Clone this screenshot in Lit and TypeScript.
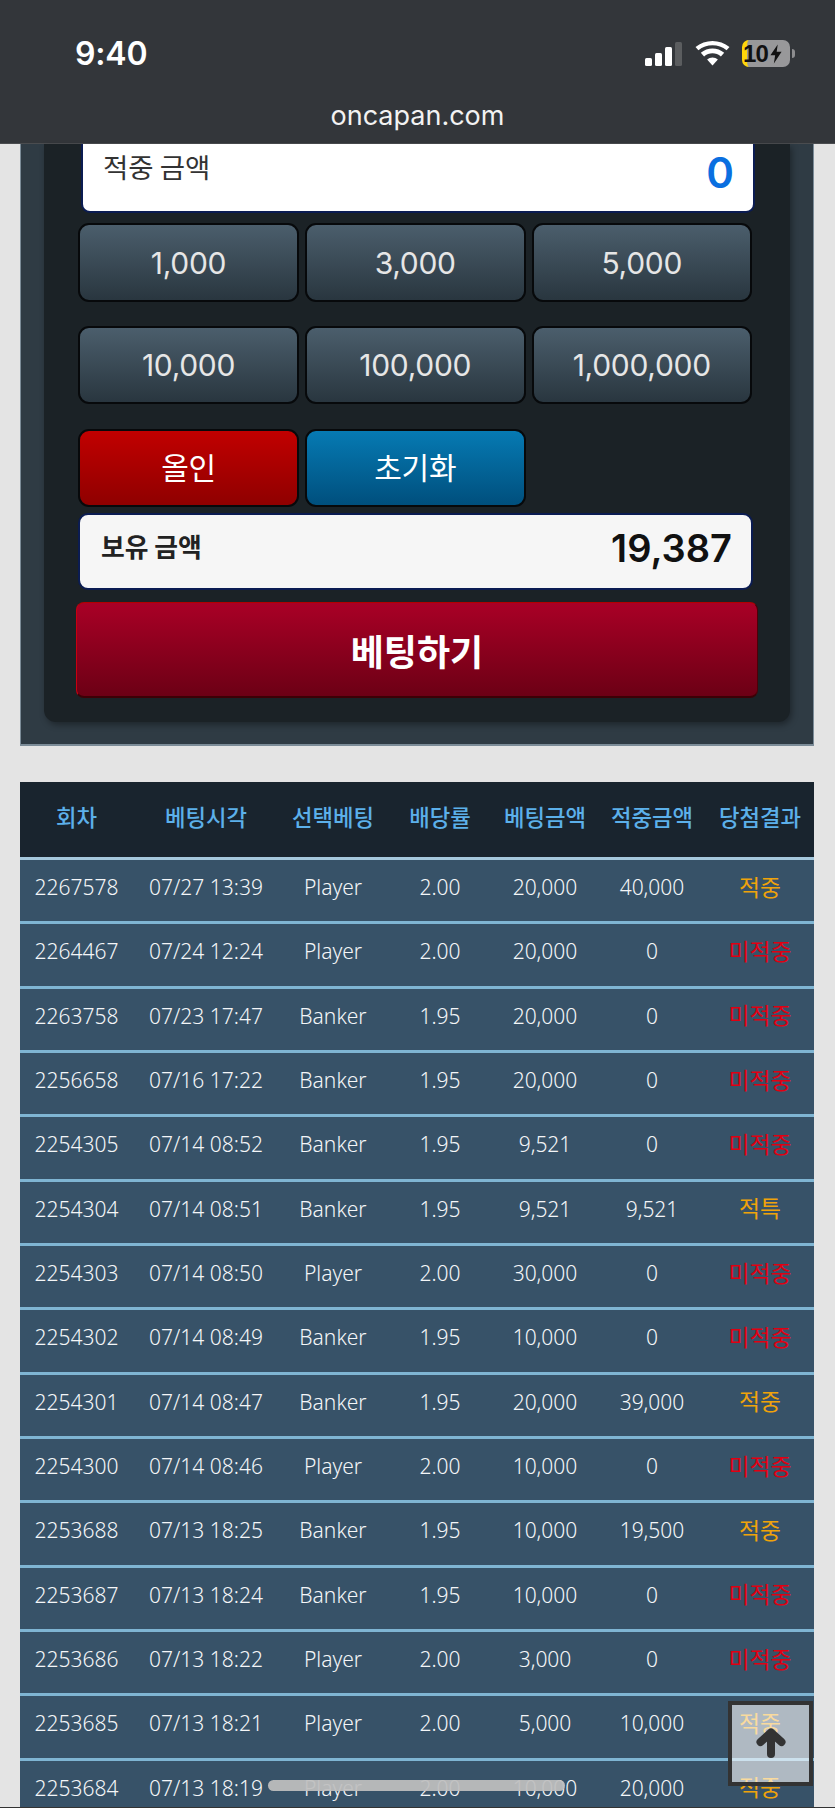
import { LitElement, html, css, svg } from "lit";
import { customElement } from "lit/decorators.js";

type Row = [string, string, string, string, string, string, string];

const HEADERS = ["회차", "베팅시각", "선택베팅", "배당률", "베팅금액", "적중금액", "당첨결과"];

const ROWS: Row[] = [
  ["2267578", "07/27 13:39", "Player", "2.00", "20,000", "40,000", "적중"],
  ["2264467", "07/24 12:24", "Player", "2.00", "20,000", "0", "미적중"],
  ["2263758", "07/23 17:47", "Banker", "1.95", "20,000", "0", "미적중"],
  ["2256658", "07/16 17:22", "Banker", "1.95", "20,000", "0", "미적중"],
  ["2254305", "07/14 08:52", "Banker", "1.95", "9,521", "0", "미적중"],
  ["2254304", "07/14 08:51", "Banker", "1.95", "9,521", "9,521", "적특"],
  ["2254303", "07/14 08:50", "Player", "2.00", "30,000", "0", "미적중"],
  ["2254302", "07/14 08:49", "Banker", "1.95", "10,000", "0", "미적중"],
  ["2254301", "07/14 08:47", "Banker", "1.95", "20,000", "39,000", "적중"],
  ["2254300", "07/14 08:46", "Player", "2.00", "10,000", "0", "미적중"],
  ["2253688", "07/13 18:25", "Banker", "1.95", "10,000", "19,500", "적중"],
  ["2253687", "07/13 18:24", "Banker", "1.95", "10,000", "0", "미적중"],
  ["2253686", "07/13 18:22", "Player", "2.00", "3,000", "0", "미적중"],
  ["2253685", "07/13 18:21", "Player", "2.00", "5,000", "10,000", "적중"],
  ["2253684", "07/13 18:19", "Player", "2.00", "10,000", "20,000", "적중"],
];

const AMOUNTS = ["1,000", "3,000", "5,000", "10,000", "100,000", "1,000,000"];

const signalIcon = svg`<svg width="37" height="24" viewBox="0 0 37 24">
  <rect x="0" y="16" width="7" height="8" rx="1.5" fill="#fff"></rect>
  <rect x="10" y="11" width="7" height="13" rx="1.5" fill="#fff"></rect>
  <rect x="20" y="5" width="7" height="19" rx="1.5" fill="#fff"></rect>
  <rect x="30" y="0" width="7" height="24" rx="1.5" fill="#5b5d5f"></rect>
</svg>`;

const wifiIcon = svg`<svg width="35" height="25" viewBox="0 0 34 25">
  <path d="M17 24.5 L11.6 18.6 C14.6 15.9 19.4 15.9 22.4 18.6 Z" fill="#fff"></path>
  <path d="M8.6 15.4 L5.3 11.8 C12 6 22 6 28.7 11.8 L25.4 15.4 C20.6 11.2 13.4 11.2 8.6 15.4 Z" fill="#fff"></path>
  <path d="M2.9 9.2 L0 6 C9.6 -2 24.4 -2 34 6 L31.1 9.2 C23 2.6 11 2.6 2.9 9.2 Z" fill="#fff"></path>
</svg>`;

const boltIcon = svg`<svg class="bolt" width="12" height="22" viewBox="0 0 14 22">
  <path d="M9 0 L0.5 12.5 H6 L4.5 22 L13.5 8.5 H7.8 Z" fill="#111"></path>
</svg>`;

const arrowIcon = svg`<svg width="30" height="30" viewBox="0 0 30 30">
  <path d="M15 26 V5 M4.5 14 L15 4.5 L25.5 14" fill="none" stroke="#333" stroke-width="8" stroke-linecap="round" stroke-linejoin="round"></path>
</svg>`;

@customElement("app-root")
export class AppRoot extends LitElement {
  static styles = css`
    :host {
      display: block;
      position: relative;
      width: 835px;
      height: 1808px;
      overflow: hidden;
      background: #e4e4e4;
      font-family: "Noto Sans", "Noto Sans CJK KR", sans-serif;
    }

    .chrome {
      height: 144px;
      box-sizing: border-box;
      background: #33363a;
      border-bottom: 1px solid #4a4c4f;
      display: flex;
      flex-direction: column;
    }
    .status {
      display: flex;
      align-items: center;
      justify-content: space-between;
      height: 27px;
      margin-top: 40px;
      padding: 0 40px 0 75px;
    }
    .time {
      font: 600 32px/27px Inter, sans-serif;
      color: #fff;
      letter-spacing: -0.2px;
    }
    .status-icons {
      display: flex;
      align-items: center;
    }
    .status-icons svg:first-child {
      margin-right: 13px;
    }
    .status-icons svg:nth-child(2) {
      margin-right: 12px;
    }
    .battery {
      display: flex;
      align-items: center;
      justify-content: center;
      box-sizing: border-box;
      width: 48px;
      height: 27px;
      padding-left: 1px;
      border-radius: 7px;
      border-left: 5px solid #ffd60a;
      background: #98989a;
      font: 700 24px/27px "Liberation Sans", sans-serif;
      letter-spacing: -0.8px;
      color: #111;
    }
    .bolt {
      flex: none;
      margin-left: 2px;
    }
    .nub {
      width: 3px;
      height: 9px;
      margin-left: 2px;
      border-radius: 0 3px 3px 0;
      background: #8d8d8f;
    }
    .url {
      margin-top: 34px;
      text-align: center;
      font: 400 27px/30px Inter, sans-serif;
      color: #f2f2f2;
    }

    .panel {
      margin: 0 21px 0 20px;
      padding: 0 23px 22px;
      background: #2f3b44;
      border: solid #7c8c98;
      border-width: 0 1px 2px;
      box-sizing: border-box;
    }
    .inner {
      padding: 0 32px 24px;
      background: #1b2226;
      border-radius: 0 0 12px 12px;
      box-shadow: 2px 3px 6px rgba(0, 0, 0, 0.35);
    }
    .hit-box {
      display: flex;
      justify-content: space-between;
      box-sizing: border-box;
      height: 69px;
      margin: 0 3px 10px 5px;
      padding: 0 19px 0 20px;
      background: #fff;
      border: 2px solid #0b1c52;
      border-top: 0;
      border-radius: 0 0 9px 9px;
    }
    .hit-label {
      font: 400 27.5px/45px "Noto Sans CJK KR", sans-serif;
      color: #333;
    }
    .hit-value {
      font: 600 42px/58px Inter, sans-serif;
      color: #0a6fe0;
    }
    .amounts {
      display: grid;
      grid-template-columns: 221px 220.5px 220.5px;
      grid-template-rows: 79px 78px;
      column-gap: 6px;
      row-gap: 24px;
      margin-left: 2px;
    }
    .btn {
      box-sizing: border-box;
      display: flex;
      align-items: center;
      justify-content: center;
      border: 2px solid #07090b;
      border-radius: 11px;
      background: linear-gradient(#4b5e6c, #29363f);
      color: #e6e6e6;
      font: 400 30px/1 Inter, "Noto Sans CJK KR", sans-serif;
      letter-spacing: -0.3px;
    }
    .actions {
      grid-template-rows: 78px;
      margin-top: 25px;
    }
    .red {
      background: linear-gradient(#c10000, #8f0000);
      color: #fff;
    }
    .blue {
      background: linear-gradient(#067ab3, #004f7d);
      color: #fff;
    }
    .hold-box {
      display: flex;
      justify-content: space-between;
      box-sizing: border-box;
      height: 77px;
      margin: 6px 5px 12px 2px;
      padding: 0 19px 0 21px;
      background: #f6f6f6;
      border: 2px solid #0b1c52;
      border-radius: 10px;
    }
    .hold-label {
      font: 600 25.8px/62px "Noto Sans CJK KR", sans-serif;
      color: #222;
    }
    .hold-value {
      font: 600 38px/66px Inter, sans-serif;
      color: #111;
    }
    .bet {
      box-sizing: border-box;
      height: 96px;
      display: flex;
      align-items: center;
      justify-content: center;
      border: solid #7c0000;
      border-width: 1px 1px 2px;
      border-color: #b30000 #4d0008 #3d0006 #c80010;
      border-radius: 8px;
      background: linear-gradient(#a90026, #6c0015);
      color: #fff;
      font: 600 36px/1 "Noto Sans CJK KR", sans-serif;
    }

    .table {
      margin: 36px 21px 0 20px;
      background: #375268;
      color: #f4f6f8;
      font-size: 21px;
      font-weight: 300;
    }
    .tr {
      display: grid;
      grid-template-columns: 113px 146px 108px 106px 104px 110px 106px;
      align-items: center;
      box-sizing: border-box;
      height: 64.33px;
      padding-bottom: 7px;
      border-bottom: 3px solid #7fb5d3;
      text-align: center;
      white-space: nowrap;
    }
    .tr.head {
      height: 78px;
      background: #19242e;
      border-bottom-color: #a5c8dd;
      color: #5cb0ea;
      font: 500 22.3px/1 "Noto Sans CJK KR", sans-serif;
    }
    .result {
      font: 400 22.8px/1 "Noto Sans CJK KR", sans-serif;
    }
    .win {
      color: #f0a30a;
    }
    .lose {
      color: #e00012;
    }

    .to-top {
      position: absolute;
      left: 728px;
      top: 1701px;
      width: 85px;
      height: 85px;
      box-sizing: border-box;
      display: flex;
      align-items: flex-end;
      justify-content: center;
      padding-bottom: 24px;
      border: 4px solid #333;
      background: rgba(255, 255, 255, 0.6);
    }
    .home-bar {
      position: absolute;
      left: 268px;
      top: 1780px;
      width: 297px;
      height: 11px;
      border-radius: 6px;
      background: rgba(190, 190, 190, 0.93);
    }
    .edge {
      position: absolute;
      left: 0;
      right: 0;
      bottom: 0;
      height: 1px;
      background: #333;
    }
  `;

  renderResult(text: string) {
    return html`<div class="result ${text === "미적중" ? "lose" : "win"}">${text}</div>`;
  }

  render() {
    return html`
      <div class="chrome">
        <div class="status">
          <span class="time">9:40</span>
          <div class="status-icons">
            ${signalIcon} ${wifiIcon}
            <div class="battery">10${boltIcon}</div>
            <div class="nub"></div>
          </div>
        </div>
        <div class="url">oncapan.com</div>
      </div>

      <div class="panel">
        <div class="inner">
          <div class="hit-box">
            <span class="hit-label">적중 금액</span>
            <span class="hit-value">0</span>
          </div>
          <div class="amounts">
            ${AMOUNTS.map((a) => html`<div class="btn">${a}</div>`)}
          </div>
          <div class="amounts actions">
            <div class="btn red">올인</div>
            <div class="btn blue">초기화</div>
          </div>
          <div class="hold-box">
            <span class="hold-label">보유 금액</span>
            <span class="hold-value">19,387</span>
          </div>
          <div class="bet">베팅하기</div>
        </div>
      </div>

      <div class="table">
        <div class="tr head">${HEADERS.map((h) => html`<div>${h}</div>`)}</div>
        ${ROWS.map(
          (r) => html`<div class="tr">
            ${r.slice(0, 6).map((c) => html`<div>${c}</div>`)} ${this.renderResult(r[6])}
          </div>`
        )}
      </div>

      <div class="to-top">${arrowIcon}</div>
      <div class="home-bar"></div>
      <div class="edge"></div>
    `;
  }
}

declare global {
  interface HTMLElementTagNameMap {
    "app-root": AppRoot;
  }
}
